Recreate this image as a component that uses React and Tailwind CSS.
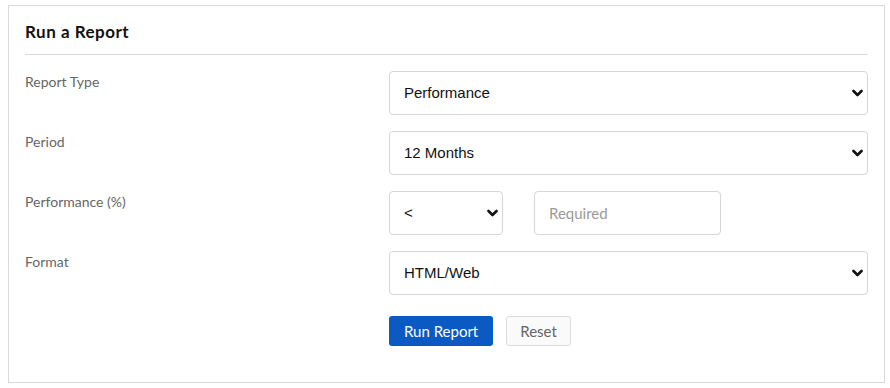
import React from "react";

const Chevron = () => (
    <svg className="pointer-events-none absolute right-[5px] top-1/2 -translate-y-1/2" width="11" height="8" viewBox="0 0 11 8">
        <path d="M1.5 2 L5.5 6 L9.5 2" fill="none" stroke="#111" strokeWidth="2.6" strokeLinecap="round" strokeLinejoin="round" />
    </svg>
);

const Select = ({ value, options, className = "" }) => (
    <div className={`relative h-[44px] ${className}`}>
        <select
            defaultValue={value}
            className="h-full w-full appearance-none rounded-[4px] border border-[#d6d6d6] bg-white pl-[14px] pr-8 text-[15px] text-[#111] outline-none font-['Liberation_Sans',Arial,sans-serif]"
        >
            {options.map((o) => (
                <option key={o}>{o}</option>
            ))}
        </select>
        <Chevron />
    </div>
);

const Row = ({ label, children }) => (
    <div className="flex">
        <label className="w-[364px] shrink-0 pt-0 text-[14px] text-[#666]">{label}</label>
        <div className="flex-1">{children}</div>
    </div>
);

export default function App() {
    return (
        <div className="bg-white px-[8px] pt-[5px] font-['Lato',sans-serif]">
            <div className="w-[877px] h-[378px] border border-[#d9d9d9] px-[16px]">
                <h2 className="pt-[16px] pb-[12px] text-[17px] leading-[20px] tracking-[0.5px] font-bold text-[#111] border-b border-[#d9d9d9]">Run a Report</h2>

                <div className="mt-[16px] flex flex-col gap-[16px]">
                    <Row label="Report Type">
                        <Select value="Performance" options={["Performance", "Holdings", "Transactions"]} />
                    </Row>
                    <Row label="Period">
                        <Select value="12 Months" options={["3 Months", "6 Months", "12 Months"]} />
                    </Row>
                    <Row label="Performance (%)">
                        <div className="flex gap-[31px]">
                            <Select value="<" options={["<", ">", "="]} className="w-[114px]" />
                            <input
                                placeholder="Required"
                                className="h-[44px] w-[187px] rounded-[4px] border border-[#d6d6d6] px-[14px] text-[15px] text-[#111] placeholder:text-[#9a9a9a] outline-none"
                            />
                        </div>
                    </Row>
                    <Row label="Format">
                        <Select value="HTML/Web" options={["HTML/Web", "PDF", "Excel"]} />
                    </Row>
                    <Row label="">
                        <div className="mt-[5px] flex gap-[13px]">
                            <button className="h-[30px] rounded-[3px] bg-[#0b5ac4] px-[15px] text-[15px] text-white">Run Report</button>
                            <button className="h-[30px] rounded-[3px] border border-[#dcdcdc] bg-[#fafafa] px-[13px] text-[15px] text-[#666]">Reset</button>
                        </div>
                    </Row>
                </div>
            </div>
        </div>
    );
}
